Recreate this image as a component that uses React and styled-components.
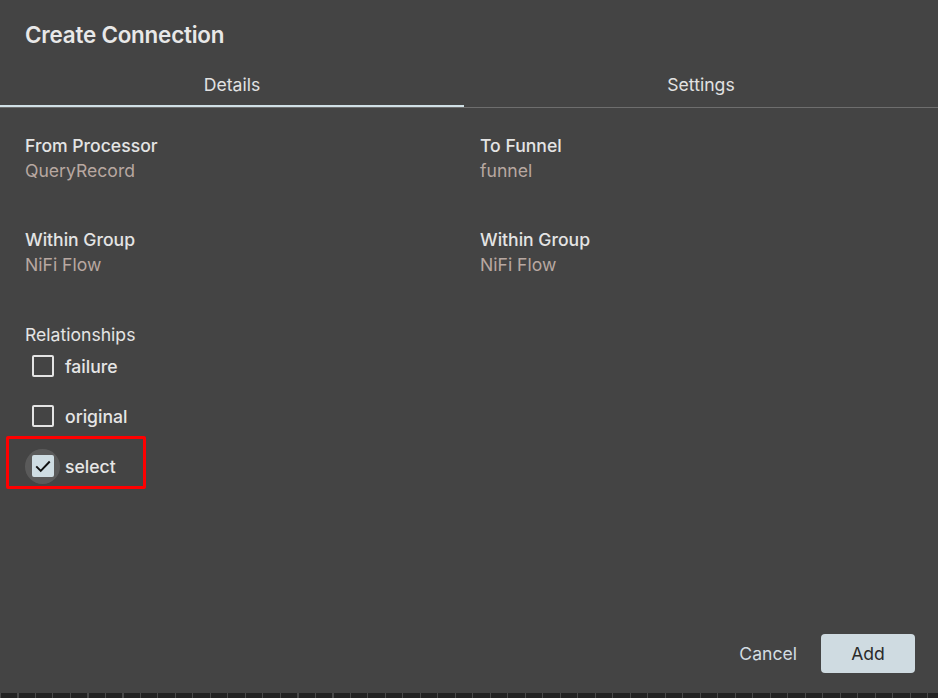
import styled, { createGlobalStyle } from "styled-components";
import { useState } from "react";

const Global = createGlobalStyle`
  html, body {
    margin: 0;
    padding: 0;
    background: #444444;
  }
  body {
    font-family: Inter, "Noto Sans", "Liberation Sans", sans-serif;
  }
`;

const Dialog = styled.div`
  width: 938px;
  height: 698px;
  background: #444444;
  color: #e6e6e6;
  display: flex;
  flex-direction: column;
  overflow: hidden;
`;

const Title = styled.h2`
  margin: 0;
  padding: 20px 25px 0;
  height: 49px;
  box-sizing: border-box;
  font-size: 22.4px;
  line-height: 30px;
  font-weight: 600;
  letter-spacing: -0.2px;
  color: #e8e8e8;
`;

const TabBar = styled.div`
  display: flex;
  border-bottom: 1px solid #6e6e6e;
  height: 59px;
  box-sizing: border-box;
`;

const Tab = styled.button`
  flex: ${({ $w }) => ($w ? `0 0 ${$w}` : "1")};
  background: none;
  border: none;
  font-family: inherit;
  font-size: 17.6px;
  color: #e2e2e2;
  padding: 12px 0 0;
  position: relative;
  cursor: pointer;

  &::after {
    content: "";
    position: absolute;
    left: 0;
    right: 0;
    bottom: 0;
    height: 2px;
    background: ${({ $active }) => ($active ? "#d0e0e6" : "transparent")};
  }
`;

const Body = styled.div`
  flex: 1;
  padding: 26px 25px 0;
  display: grid;
  grid-template-columns: 455px 1fr;
  grid-auto-rows: min-content;
  row-gap: 45px;
`;

const Field = styled.div`
  display: flex;
  flex-direction: column;
  gap: 1px;
`;

const Label = styled.div`
  font-size: 17.6px;
  font-weight: ${({ $regular }) => ($regular ? 400 : 500)};
  color: #e4e4e4;
  line-height: 24px;
`;

const Value = styled.div`
  font-size: 17.6px;
  color: #b8a8a1;
  line-height: 24px;
`;

const Relationships = styled.div`
  grid-column: 1 / 3;
  display: flex;
  flex-direction: column;
  margin-top: 1px;

  ${Label} {
    margin-bottom: -6px;
  }
`;

const CheckRow = styled.label`
  display: flex;
  align-items: center;
  height: 50px;
  gap: 5px;
  position: relative;
  width: max-content;
  cursor: pointer;
`;

const BoxWrap = styled.span`
  width: 35px;
  height: 35px;
  border-radius: 50%;
  display: flex;
  align-items: center;
  justify-content: center;
  background: ${({ $checked }) => ($checked ? "rgba(255,255,255,0.12)" : "transparent")};
`;

const Box = styled.span`
  width: 22px;
  height: 22px;
  box-sizing: border-box;
  border-radius: 2px;
  border: 2px solid ${({ $checked }) => ($checked ? "#cfdde3" : "#e4e4e4")};
  background: ${({ $checked }) => ($checked ? "#cfdde3" : "transparent")};
  display: flex;
  align-items: center;
  justify-content: center;
`;

const CheckText = styled.span`
  font-size: 17.6px;
  font-weight: 500;
  color: #e6e6e6;
`;

const Highlight = styled.span`
  position: absolute;
  left: -19px;
  top: -5px;
  width: 140px;
  height: 53px;
  box-sizing: border-box;
  border: 3px solid #ff0000;
  border-radius: 2px;
  pointer-events: none;
`;

const Footer = styled.div`
  display: flex;
  justify-content: flex-end;
  align-items: center;
  gap: 24px;
  padding: 0 23px 20px;
`;

const TextButton = styled.button`
  background: none;
  border: none;
  font-family: inherit;
  font-size: 17.6px;
  color: #d3dde2;
  padding: 0;
  cursor: pointer;
`;

const PrimaryButton = styled.button`
  width: 94px;
  height: 39px;
  border: none;
  border-radius: 4px;
  background: #cfdbe1;
  color: #2a2a2a;
  font-family: inherit;
  font-size: 17.6px;
  cursor: pointer;
`;

const Ruler = styled.div`
  height: 5px;
  background-color: #232323;
  background-image: repeating-linear-gradient(
    to right,
    #4a4a4a 0,
    #4a4a4a 1px,
    transparent 1px,
    transparent 17.5px
  );
`;

const relationships = [
  { name: "failure", checked: false },
  { name: "original", checked: false },
  { name: "select", checked: true, highlight: true },
];

export default function App() {
  const [tab, setTab] = useState("details");
  const [checks, setChecks] = useState(relationships.map((r) => r.checked));

  const toggle = (i) => {
    const next = [...checks];
    next[i] = !next[i];
    setChecks(next);
  };

  return (
    <>
      <Global />
      <Dialog>
        <Title>Create Connection</Title>
        <TabBar>
          <Tab $w="464px" $active={tab === "details"} onClick={() => setTab("details")}>
            Details
          </Tab>
          <Tab $active={tab === "settings"} onClick={() => setTab("settings")}>
            Settings
          </Tab>
        </TabBar>
        <Body>
          <Field>
            <Label>From Processor</Label>
            <Value>QueryRecord</Value>
          </Field>
          <Field>
            <Label>To Funnel</Label>
            <Value>funnel</Value>
          </Field>
          <Field>
            <Label>Within Group</Label>
            <Value>NiFi Flow</Value>
          </Field>
          <Field>
            <Label>Within Group</Label>
            <Value>NiFi Flow</Value>
          </Field>
          <Relationships>
            <Label $regular>Relationships</Label>
            {relationships.map((r, i) => (
              <CheckRow
                key={r.name}
                onClick={(e) => {
                  e.preventDefault();
                  toggle(i);
                }}
              >
                <BoxWrap $checked={checks[i]}>
                  <Box $checked={checks[i]}>
                    {checks[i] && (
                      <svg width="18" height="18" viewBox="0 0 24 24">
                        <path
                          d="M3 12.5 L9 18.5 L21 6"
                          fill="none"
                          stroke="#111"
                          strokeWidth="2.6"
                        />
                      </svg>
                    )}
                  </Box>
                </BoxWrap>
                <CheckText>{r.name}</CheckText>
                {r.highlight && <Highlight />}
              </CheckRow>
            ))}
          </Relationships>
        </Body>
        <Footer>
          <TextButton>Cancel</TextButton>
          <PrimaryButton>Add</PrimaryButton>
        </Footer>
        <Ruler />
      </Dialog>
    </>
  );
}
